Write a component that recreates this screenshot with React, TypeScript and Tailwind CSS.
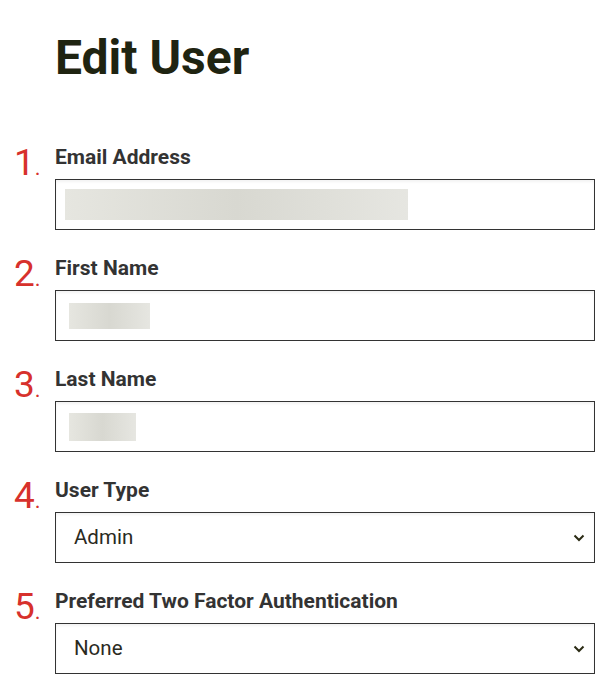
import React from "react";

type Field = {
  n: number;
  label: string;
  kind: "text" | "select";
  blur?: { w: string; h: string; ml: string };
  value?: string;
};

const fields: Field[] = [
  { n: 1, label: "Email Address", kind: "text", blur: { w: "w-[343px]", h: "h-[31px]", ml: "ml-[9px]" } },
  { n: 2, label: "First Name", kind: "text", blur: { w: "w-[81px]", h: "h-[26px]", ml: "ml-[13px]" } },
  { n: 3, label: "Last Name", kind: "text", blur: { w: "w-[67px]", h: "h-[28px]", ml: "ml-[13px]" } },
  { n: 4, label: "User Type", kind: "select", value: "Admin" },
  { n: 5, label: "Preferred Two Factor Authentication", kind: "select", value: "None" },
];

const Chevron = () => (
  <svg width="12" height="8" viewBox="0 0 12 8" fill="none" className="shrink-0">
    <path d="M1.5 1.5 6 6l4.5-4.5" stroke="#2b2b14" strokeWidth="2" />
  </svg>
);

const App: React.FC = () => {
  return (
    <div className="min-h-screen bg-white font-['Roboto',sans-serif]">
      <h1 className="pl-[55px] pt-[34px] text-[48px] leading-[48px] font-bold text-[#1f2411]">
        Edit User
      </h1>

      <div className="mt-[63px] flex flex-col gap-[26px]">
        {fields.map((f) => (
          <div key={f.n} className="flex items-start">
            <div className="w-[55px] pl-[14px] text-[37px] leading-[35px] text-[#d7312c]">
              {f.n}
              <span className="text-[22px]">.</span>
            </div>
            <div className="w-[540px]">
              <label className="block text-[21px] leading-[24px] font-bold text-[#333333]">
                {f.label}
              </label>
              {f.kind === "text" ? (
                <div className="mt-[10px] flex h-[51px] items-center border border-[#333333] bg-white shadow-[inset_0_2px_3px_rgba(0,0,0,0.05)]">
                  <div
                    className={`${f.blur!.w} ${f.blur!.h} ${f.blur!.ml} bg-gradient-to-r from-[#e6e6e0] via-[#d8d8d1] to-[#e6e6e1] blur-[0.5px]`}
                  />
                </div>
              ) : (
                <div className="mt-[10px] flex h-[51px] items-center justify-between border border-[#333333] bg-white pl-[18px] pr-[9px] shadow-[inset_0_2px_3px_rgba(0,0,0,0.05)]">
                  <span className="text-[20.5px] text-[#2a2a1e]">{f.value}</span>
                  <Chevron />
                </div>
              )}
            </div>
          </div>
        ))}
      </div>
    </div>
  );
};

export default App;
